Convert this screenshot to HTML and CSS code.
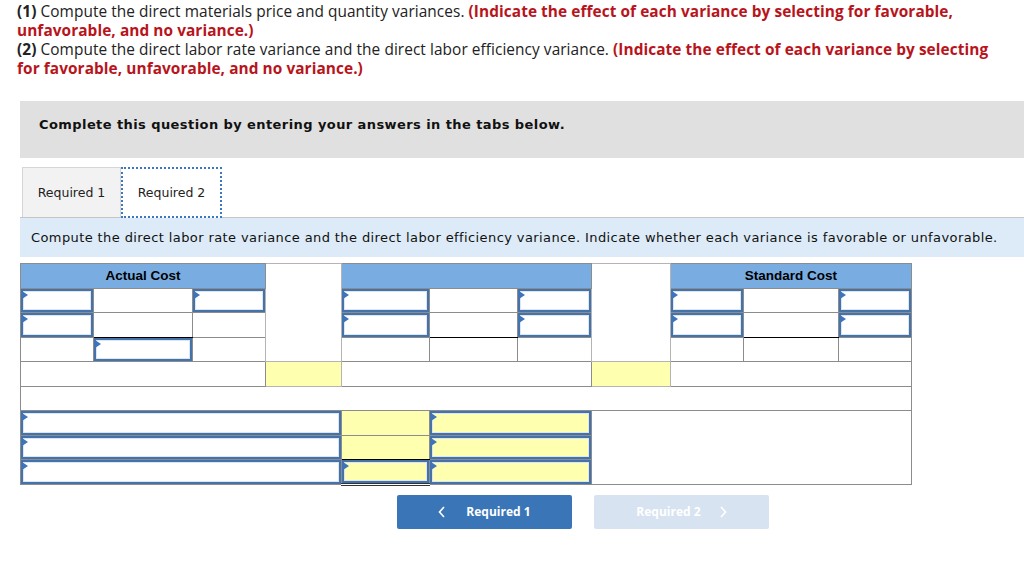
FILE: index.html
```html
<!DOCTYPE html>
<html>
  <head>
    <meta name="viewport" content="width=device-width, initial-scale=1.0" />
    <link rel="stylesheet" href="styles.css">
  </head>
  <body>
    <div class="intro">
      <p><b>(1)</b> Compute the direct materials price and quantity variances. <strong>(Indicate the effect of each variance by selecting for favorable, unfavorable, and no variance.)</strong></p>
      <p><b>(2)</b> Compute the direct labor rate variance and the direct labor efficiency variance. <strong>(Indicate the effect of each variance by selecting for favorable, unfavorable, and no variance.)</strong></p>
    </div>

    <div id="wrap">
      <div class="notice">Complete this question by entering your answers in the tabs below.</div>

      <ul class="tabs">
        <li class="tab">Required 1</li>
        <li class="tab active">Required 2</li>
      </ul>
      <div class="task">Compute the direct labor rate variance and the direct labor efficiency variance. Indicate whether each variance is favorable or unfavorable.</div>

      <table class="grid">
        <colgroup>
          <col style="width:73px"><col style="width:99px"><col style="width:73px">
          <col style="width:76px">
          <col style="width:88px"><col style="width:88px"><col style="width:73px">
          <col style="width:79px">
          <col style="width:73px"><col style="width:95px"><col style="width:73px">
        </colgroup>
        <tr>
          <th colspan="3">Actual Cost</th>
          <td class="gap" rowspan="4"></td>
          <th colspan="3"></th>
          <td class="gap" rowspan="4"></td>
          <th colspan="3">Standard Cost</th>
        </tr>
        <tr>
          <td class="in"></td><td></td><td class="in"></td>
          <td class="in"></td><td></td><td class="in"></td>
          <td class="in"></td><td></td><td class="in"></td>
        </tr>
        <tr>
          <td class="in"></td><td class="sum"></td><td></td>
          <td class="in"></td><td class="sum"></td><td class="in"></td>
          <td class="in"></td><td class="sum"></td><td class="in"></td>
        </tr>
        <tr>
          <td></td><td class="in"></td><td></td>
          <td></td><td></td><td></td>
          <td></td><td></td><td></td>
        </tr>
        <tr>
          <td colspan="3"></td><td class="yel gap"></td>
          <td colspan="3"></td><td class="yel gap"></td>
          <td colspan="3"></td>
        </tr>
        <tr>
          <td colspan="11"></td>
        </tr>
        <tr>
          <td class="in" colspan="4"></td>
          <td class="yel"></td>
          <td class="in yel" colspan="2"></td>
          <td colspan="4" rowspan="3"></td>
        </tr>
        <tr>
          <td class="in" colspan="4"></td>
          <td class="yel sum"></td>
          <td class="in yel" colspan="2"></td>
        </tr>
        <tr>
          <td class="in" colspan="4"></td>
          <td class="in yel total"></td>
          <td class="in yel" colspan="2"></td>
        </tr>
      </table>

      <div class="pager">
        <a class="btn" href="#req1">
          <svg width="8" height="12" viewBox="0 0 8 12"><polyline points="6,1 1.5,6 6,11" fill="none" stroke="#fff" stroke-width="1.6"/></svg>
          <span>Required 1</span>
        </a>
        <a class="btn off" href="#req2">
          <span>Required 2</span>
          <svg width="8" height="12" viewBox="0 0 8 12"><polyline points="2,1 6.5,6 2,11" fill="none" stroke="#fff" stroke-width="1.6"/></svg>
        </a>
      </div>
    </div>
  </body>
</html>
```

FILE: styles.css
```css
/* reset */
* {
  margin: 0;
  padding: 0;
  box-sizing: border-box;
}

html,
body {
  overflow: hidden;
}

body {
  font-family: 'Open Sans', 'Liberation Sans', Arial, sans-serif;
  color: #222;
  background-color: #fff;
}

li {
  list-style: none;
}

a {
  text-decoration: none;
}

/* 문제 설명 */
.intro {
  width: 1003px;
  padding: 2px 0 0 17px;
  font-size: 15.4px;
  line-height: 19px;
  letter-spacing: 0.07px;
}

.intro b {
  font-weight: 700;
}

.intro strong {
  color: #b8141c;
  font-weight: 700;
}

#wrap {
  padding-left: 20px;
}

.notice {
  margin-top: 23px;
  height: 57px;
  padding: 16px 0 0 19px;
  background-color: #e0e0e0;
  font-family: 'DejaVu Sans', Verdana, sans-serif;
  font-size: 13px;
  letter-spacing: 0.42px;
  font-weight: bold;
  color: #111;
}

/* 탭 */
.tabs {
  display: flex;
  margin: 9px 0 0 2px;
  height: 50px;
}

.tab {
  width: 99px;
  height: 50px;
  padding-top: 17px;
  text-align: center;
  font-family: 'DejaVu Sans', Verdana, sans-serif;
  font-size: 12.5px;
  color: #222;
  background-color: #f2f2f2;
  border: 1px solid #d6d6d6;
  border-bottom: none;
}

.tab.active {
  width: 101px;
  background-color: #fff;
  border: 2px dotted #3b78c2;
  padding-top: 16px;
  position: relative;
  z-index: 1;
  height: 51px;
}

.task {
  height: 40px;
  padding: 12px 0 0 11px;
  border-top: 1px solid #c6c6c6;
  background-color: #dcebf7;
  font-family: 'DejaVu Sans', Verdana, sans-serif;
  font-size: 13px;
  letter-spacing: 0.4px;
  color: #111;
}

/* 계산표 */
.grid {
  margin-top: 6px;
  width: 892px;
  table-layout: fixed;
  border-collapse: collapse;
}

.grid th,
.grid td {
  height: 24.5px;
  padding: 0;
  border: 1px solid #8c8c8c;
}

.grid th {
  background-color: #79ade2;
  font-family: 'Liberation Sans', Arial, sans-serif;
  font-size: 13.5px;
  font-weight: bold;
  color: #000;
  vertical-align: middle;
}

.grid td.gap {
  border-color: #b4b4b4;
}

.grid td.yel {
  background-color: #ffffb0;
}

.grid td.sum {
  border-bottom: 1px solid #000;
}

.grid td.in {
  position: relative;
  box-shadow: inset 0 0 0 2px #4672aa, inset 0 0 0 3px #d8e6f5;
}

/* 입력칸 표시 삼각형 */
.grid td.in::before {
  content: '';
  position: absolute;
  top: 2px;
  left: 1px;
  border-style: solid;
  border-width: 4px 0 4px 6px;
  border-color: transparent transparent transparent #3e74bb;
}

.grid td.total {
  border-top: 1px solid #000;
  border-bottom: 3px double #333;
}

/* 이전 / 다음 버튼 */
.pager {
  display: flex;
  gap: 22px;
  margin-top: 9px;
  padding-left: 377px;
}

.btn {
  display: flex;
  align-items: center;
  justify-content: center;
  gap: 20px;
  width: 175px;
  height: 34px;
  border-radius: 2px;
  background-color: #3a76b7;
  color: #fff;
  font-family: 'Open Sans', Arial, sans-serif;
  font-size: 12px;
  font-weight: bold;
}

.btn.off {
  background-color: #d8e3f1;
  gap: 18px;
}
```
